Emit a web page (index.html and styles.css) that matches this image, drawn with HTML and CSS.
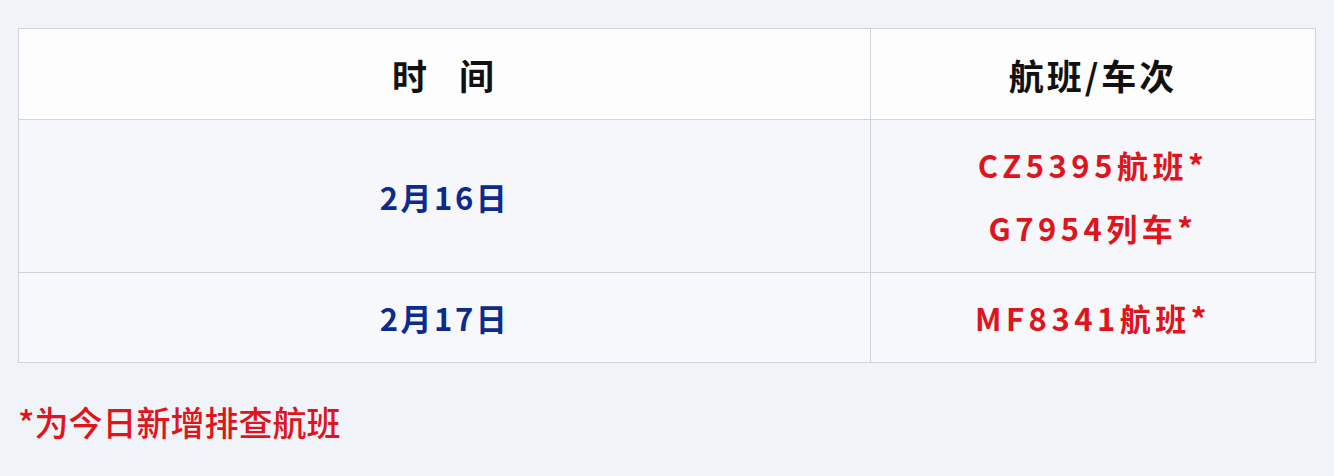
FILE: index.html
```html
<!DOCTYPE html>
<html lang="zh-CN">
<head>
<meta charset="utf-8">
<link rel="stylesheet" href="styles.css">
</head>
<body>
<main class="page">
  <table class="trips">
    <thead>
      <tr class="head-row">
        <th class="col-time">时 间</th>
        <th class="col-no">航班/车次</th>
      </tr>
    </thead>
    <tbody>
      <tr class="row-a">
        <td class="date">2月16日</td>
        <td class="nos">
          <div class="no">CZ5395航班*</div>
          <div class="no">G7954列车*</div>
        </td>
      </tr>
      <tr class="row-b">
        <td class="date">2月17日</td>
        <td class="nos">
          <div class="no">MF8341航班*</div>
        </td>
      </tr>
    </tbody>
  </table>
  <p class="note">*为今日新增排查航班</p>
</main>
</body>
</html>
```

FILE: styles.css
```css
html, body {
  margin: 0;
  padding: 0;
  background: #f0f3f8;
}
.page {
  padding: 28px 18px 0 18px;
  font-family: "Noto Sans CJK SC", "Noto Sans", sans-serif;
}
.trips {
  width: 100%;
  border-collapse: collapse;
  table-layout: fixed;
  border: 1px solid #cfd3da;
}
.trips th, .trips td {
  border: 1px solid #cfd3da;
  text-align: center;
  vertical-align: middle;
  padding: 0;
}
.col-time { width: 851px; }
.head-row {
  height: 91px;
  background: #fdfdfe;
}
.head-row th {
  font-size: 35px;
  font-weight: 700;
  color: #111;
  letter-spacing: 3px;
}
.col-time {
  word-spacing: 18px;
}
.row-a { height: 153px; background: #f5f7fa; }
.row-b { height: 90px; background: #f7f8fb; }
.date {
  font-size: 31px;
  font-weight: 700;
  color: #0d2a8e;
  letter-spacing: 2.5px;
}
.nos {
  color: #e0141c;
  font-size: 31px;
  font-weight: 700;
  letter-spacing: 4.5px;
  padding-top: 3px;
}
.no {
  line-height: 63px;
}
.note {
  margin: 36px 0 0 0;
  font-size: 34px;
  line-height: 46px;
  color: #e0141c;
  font-weight: 500;
}
```
